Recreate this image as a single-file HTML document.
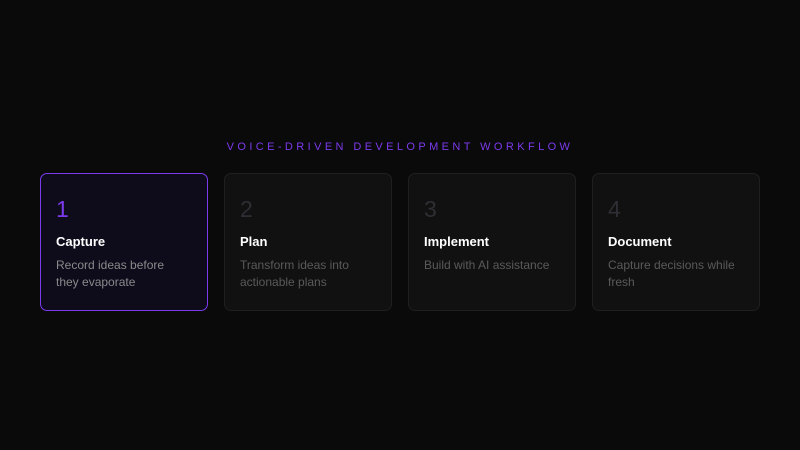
<!DOCTYPE html>
<html><head><meta charset="utf-8"><style>
html,body{margin:0;padding:0;width:800px;height:450px;background:#0a0a0a;overflow:hidden;font-family:"Liberation Sans",sans-serif;}
.h{position:absolute;left:0;width:800px;top:141px;text-align:center;color:#7c3aed;font-size:11px;letter-spacing:3.4px;}
.card{position:absolute;top:173px;width:166px;height:136px;border:1px solid #1f1f1f;border-radius:7px;background:#111111;box-sizing:content-box;}
.card.a{border-color:#7c3aed;background:#0e0b1b;}
.n{position:absolute;left:15px;top:22px;font-size:23px;color:#2e2e35;line-height:26px;}
.a .n{color:#7c3aed;}
.t{position:absolute;left:15px;top:59px;font-size:13px;color:#fff;line-height:18px;font-weight:600;}
.d{position:absolute;left:15px;top:83px;width:128px;font-size:12px;color:#5a5a5a;line-height:17px;}
.a .d{color:#8a8a8a;}
</style></head><body>
<div class="h">VOICE-DRIVEN DEVELOPMENT WORKFLOW</div>
<div class="card a" style="left:40px"><div class="n">1</div><div class="t">Capture</div><div class="d">Record ideas before they evaporate</div></div>
<div class="card" style="left:224px"><div class="n">2</div><div class="t">Plan</div><div class="d">Transform ideas into actionable plans</div></div>
<div class="card" style="left:408px"><div class="n">3</div><div class="t">Implement</div><div class="d">Build with AI assistance</div></div>
<div class="card" style="left:592px"><div class="n">4</div><div class="t">Document</div><div class="d">Capture decisions while fresh</div></div>
</body></html>
